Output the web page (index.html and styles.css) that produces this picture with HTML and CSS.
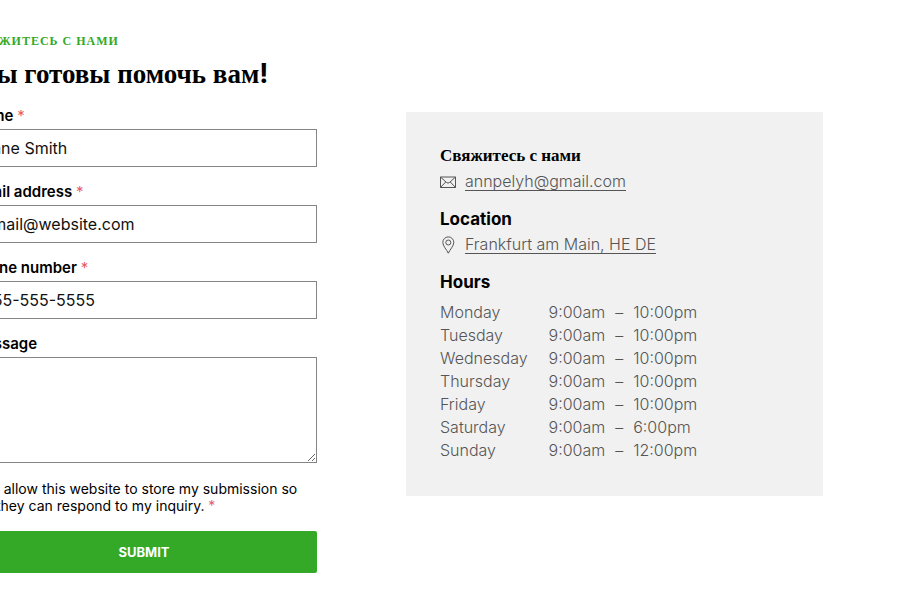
FILE: index.html
```html
<!DOCTYPE html>
<html lang="ru">
<head>
<meta charset="utf-8">
<meta name="viewport" content="width=device-width, initial-scale=1">
<title>Свяжитесь с нами</title>
<link rel="stylesheet" href="styles.css">
</head>
<body>
<main class="contact">
  <section class="inquiry">
    <p class="eyebrow">Свяжитесь с нами</p>
    <h1 class="title">Мы готовы помочь вам<span class="mark">!</span></h1>
    <form class="form">
      <div class="field">
        <label for="name">Name <span class="required">*</span></label>
        <input id="name" type="text" placeholder="Jane Smith">
      </div>
      <div class="field">
        <label for="email">Email address <span class="required">*</span></label>
        <input id="email" type="email" placeholder="email@website.com">
      </div>
      <div class="field">
        <label for="phone">Phone number <span class="required">*</span></label>
        <input id="phone" type="tel" placeholder="555-555-5555">
      </div>
      <div class="field">
        <label for="message">Message</label>
        <textarea id="message"></textarea>
      </div>
      <div class="consent">
        <input id="consent" type="checkbox">
        <label for="consent">I allow this website to store my submission so they can respond to my inquiry. <span class="required">*</span></label>
      </div>
      <button class="submit" type="submit">SUBMIT</button>
    </form>
  </section>

  <aside class="card">
    <h2 class="card-title cyrillic">Свяжитесь с нами</h2>
    <div class="detail">
      <svg class="icon" viewBox="0 0 16 18" aria-hidden="true"><path d="M.5 4h15v10.500H.5zM.5 4l6 5.500q1.500 1.200 3 0l6-5.500M.5 14.500l5.300-5.600M15.500 14.500l-5.300-5.600"/></svg>
      <a href="mailto:annpelyh@gmail.com">annpelyh@gmail.com</a>
    </div>
    <h2 class="card-title">Location</h2>
    <div class="detail">
      <svg class="icon" viewBox="0 0 16 18" aria-hidden="true"><path d="M8.300 17.200C6.700 13.600 2.800 10 2.800 6.400a5.500 5.500 0 0 1 11 0c0 3.600-3.900 7.200-5.500 10.800z"/><circle cx="8.300" cy="6.500" r="2.500"/></svg>
      <a href="#map">Frankfurt am Main, HE DE</a>
    </div>
    <h2 class="card-title">Hours</h2>
    <table class="hours">
      <tbody>
        <tr><th scope="row">Monday</th><td>9:00am</td><td>–</td><td>10:00pm</td></tr>
        <tr><th scope="row">Tuesday</th><td>9:00am</td><td>–</td><td>10:00pm</td></tr>
        <tr><th scope="row">Wednesday</th><td>9:00am</td><td>–</td><td>10:00pm</td></tr>
        <tr><th scope="row">Thursday</th><td>9:00am</td><td>–</td><td>10:00pm</td></tr>
        <tr><th scope="row">Friday</th><td>9:00am</td><td>–</td><td>10:00pm</td></tr>
        <tr><th scope="row">Saturday</th><td>9:00am</td><td>–</td><td>6:00pm</td></tr>
        <tr><th scope="row">Sunday</th><td>9:00am</td><td>–</td><td>12:00pm</td></tr>
      </tbody>
    </table>
  </aside>
</main>
</body>
</html>
```
FILE: styles.css
```css
* {
  box-sizing: border-box;
}

body {
  margin: 0;
  background: #fff;
  color: #000;
  font-family: Inter, "Liberation Sans", sans-serif;
  font-size: 16px;
}

.contact {
  display: grid;
  grid-template-columns: 346fr 417fr;
  column-gap: 89px;
  align-items: center;
  margin: 0 77px 0 -29px;
  padding: 32px 0 24px;
}

.inquiry {
  padding-bottom: 2px;
}

.eyebrow {
  margin: 0 0 9px;
  color: #33a927;
  font: bold 12px/18px "Liberation Serif", serif;
  letter-spacing: 1px;
  text-transform: uppercase;
}

.title {
  margin: 0 0 17px;
  font: bold 27px/30px "Liberation Serif", serif;
}

.mark {
  font-family: Inter, "Liberation Sans", sans-serif;
  line-height: 1;
}

.field {
  display: flex;
  flex-direction: column;
  gap: 3px;
  margin-bottom: 15px;
}

.field label {
  font-size: 15px;
  font-weight: 600;
  line-height: 20px;
}

.required {
  color: #e85c68;
  font-weight: 400;
}

.field input,
.field textarea {
  width: 100%;
  border: 1px solid #858585;
  border-radius: 0;
  background: #fff;
  color: #111;
  font: inherit;
}

.field input {
  height: 38px;
  padding: 0 11px;
}

.field input::placeholder {
  color: #111;
  opacity: 1;
}

.field textarea {
  display: block;
  height: 106px;
  padding: 9px 11px;
  resize: vertical;
}

.consent {
  display: flex;
  align-items: flex-start;
  gap: 9px;
  margin: 17px 0;
  font-size: 14px;
  line-height: 17px;
}

.consent input {
  flex: none;
  width: 16px;
  height: 16px;
  margin: 0;
}

.submit {
  display: block;
  width: 100%;
  height: 42px;
  border: 0;
  border-radius: 2px;
  background: #33a927;
  color: #fff;
  font: 700 13px/20px Inter, "Liberation Sans", sans-serif;
}

.card {
  padding: 34px;
  background: #f1f1f1;
  color: #555;
}

.card-title {
  margin: 0 0 4px;
  color: #000;
  font-size: 17px;
  font-weight: 700;
  line-height: 20px;
}

.cyrillic {
  font-family: "Liberation Serif", serif;
}

.detail {
  display: flex;
  align-items: center;
  gap: 9px;
  height: 24px;
  margin-bottom: 15px;
}

.icon {
  flex: none;
  width: 16px;
  height: 18px;
  fill: none;
  stroke: #555;
  stroke-width: 1;
  stroke-linejoin: round;
}

.detail a {
  border-bottom: 1px solid #555;
  color: #555;
  font-weight: 300;
  line-height: 18px;
  text-decoration: none;
}

.hours {
  margin-top: 9px;
  border-collapse: collapse;
  font-weight: 300;
  line-height: 23px;
}

.hours th,
.hours td {
  padding: 0 10px 0 0;
  font-weight: 300;
  text-align: left;
}

.hours th {
  padding-right: 21px;
}
```
